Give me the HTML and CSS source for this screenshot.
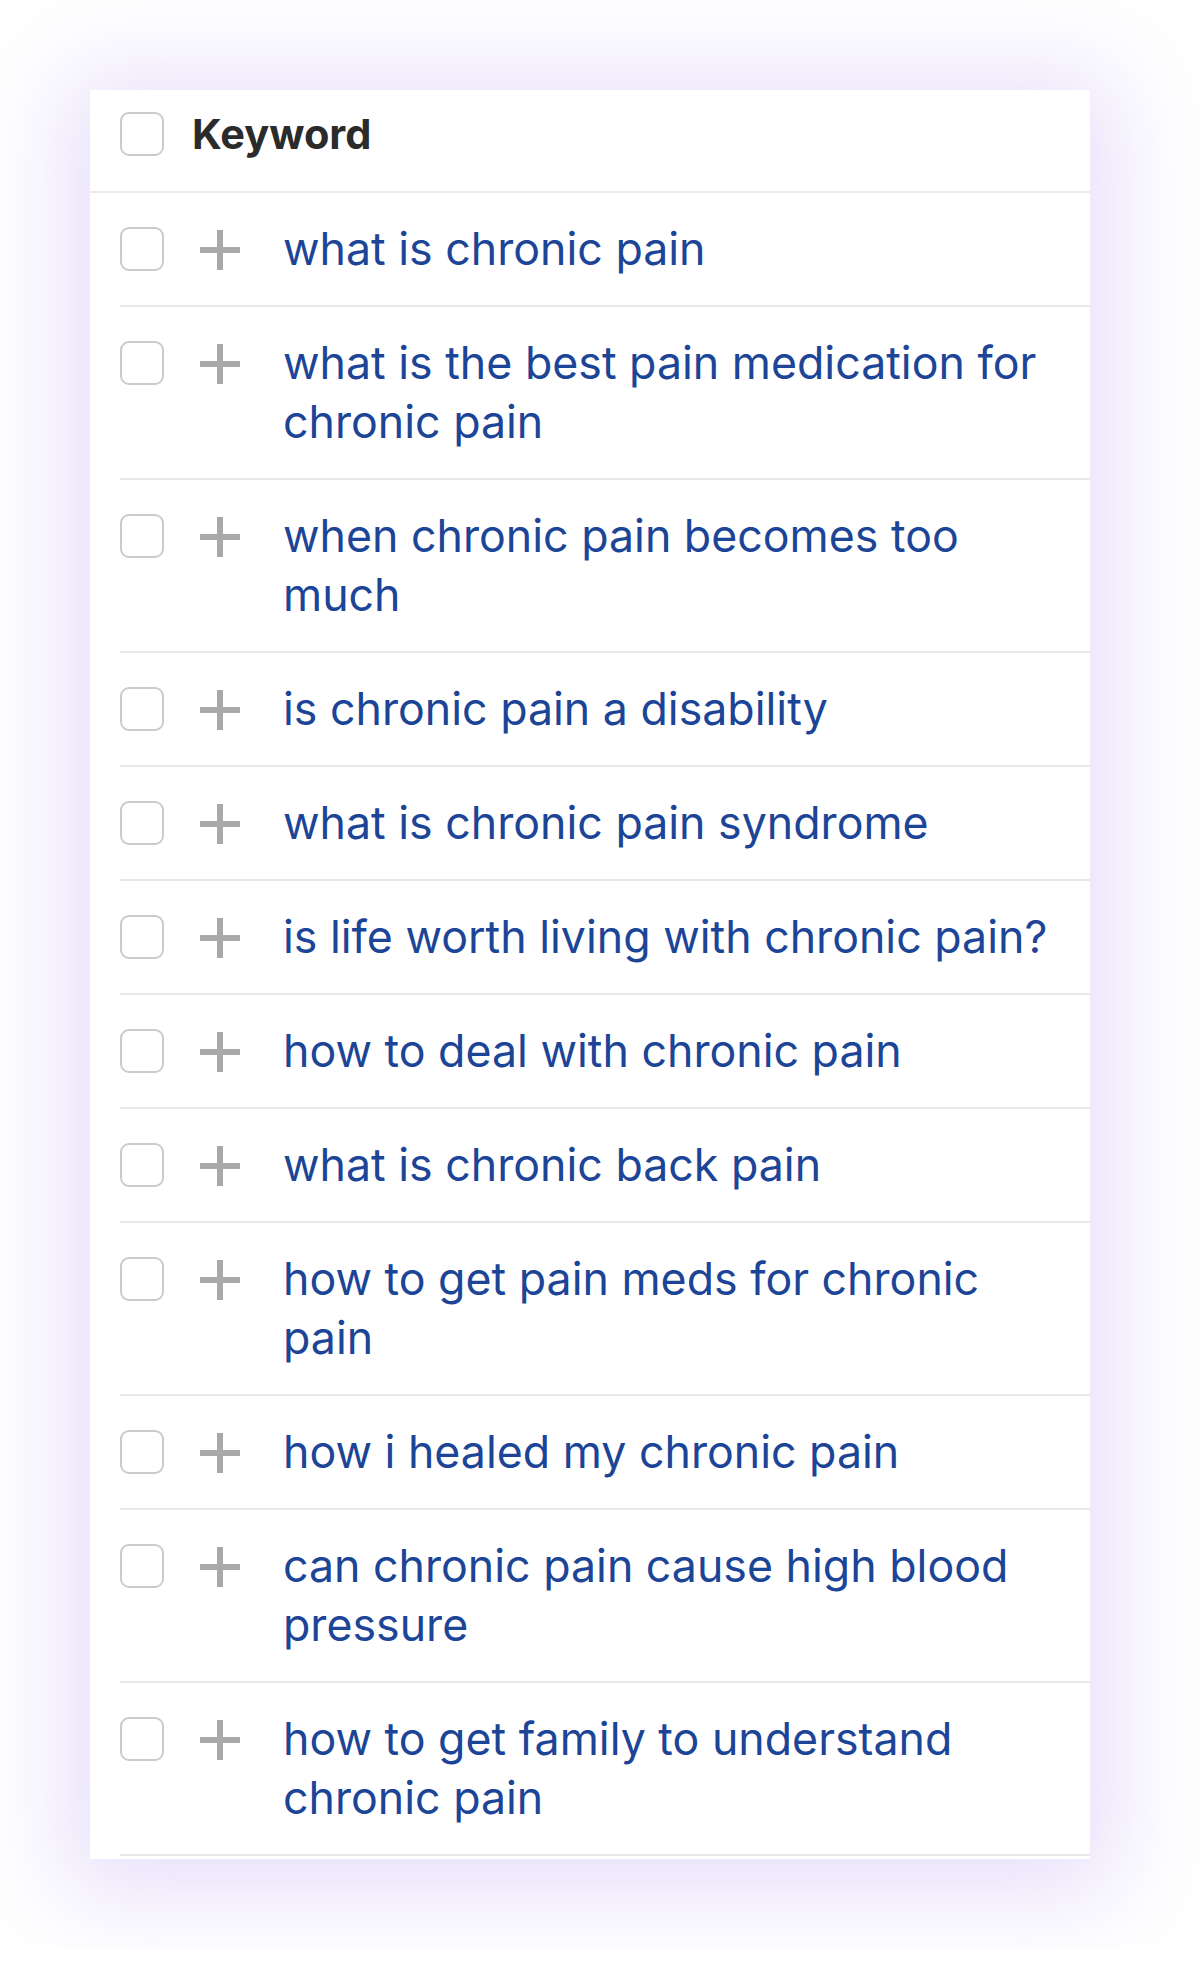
FILE: index.html
```html
<!DOCTYPE html>
<html lang="en">
<head>
    <meta charset="UTF-8">
    <title>Keywords</title>
    <meta name="viewport" content="width=device-width, initial-scale=1">
    <link rel="stylesheet" href="styles.css">
</head>
<body>
    <div id="card">
        <div class="head">
            <input type="checkbox" class="check">
            <span class="head-title">Keyword</span>
        </div>

        <ul id="keywords">
            <li class="row">
                <input type="checkbox" class="check">
                <svg class="add" viewBox="0 0 40 40"><path d="M20 0v40M0 20h40"/></svg>
                <span class="kw">what is chronic pain</span>
            </li>
            <li class="row">
                <input type="checkbox" class="check">
                <svg class="add" viewBox="0 0 40 40"><path d="M20 0v40M0 20h40"/></svg>
                <span class="kw">what is the best pain medication for chronic pain</span>
            </li>
            <li class="row">
                <input type="checkbox" class="check">
                <svg class="add" viewBox="0 0 40 40"><path d="M20 0v40M0 20h40"/></svg>
                <span class="kw">when chronic pain becomes too much</span>
            </li>
            <li class="row">
                <input type="checkbox" class="check">
                <svg class="add" viewBox="0 0 40 40"><path d="M20 0v40M0 20h40"/></svg>
                <span class="kw">is chronic pain a disability</span>
            </li>
            <li class="row">
                <input type="checkbox" class="check">
                <svg class="add" viewBox="0 0 40 40"><path d="M20 0v40M0 20h40"/></svg>
                <span class="kw">what is chronic pain syndrome</span>
            </li>
            <li class="row">
                <input type="checkbox" class="check">
                <svg class="add" viewBox="0 0 40 40"><path d="M20 0v40M0 20h40"/></svg>
                <span class="kw">is life worth living with chronic pain?</span>
            </li>
            <li class="row">
                <input type="checkbox" class="check">
                <svg class="add" viewBox="0 0 40 40"><path d="M20 0v40M0 20h40"/></svg>
                <span class="kw">how to deal with chronic pain</span>
            </li>
            <li class="row">
                <input type="checkbox" class="check">
                <svg class="add" viewBox="0 0 40 40"><path d="M20 0v40M0 20h40"/></svg>
                <span class="kw">what is chronic back pain</span>
            </li>
            <li class="row">
                <input type="checkbox" class="check">
                <svg class="add" viewBox="0 0 40 40"><path d="M20 0v40M0 20h40"/></svg>
                <span class="kw">how to get pain meds for chronic pain</span>
            </li>
            <li class="row">
                <input type="checkbox" class="check">
                <svg class="add" viewBox="0 0 40 40"><path d="M20 0v40M0 20h40"/></svg>
                <span class="kw">how i healed my chronic pain</span>
            </li>
            <li class="row">
                <input type="checkbox" class="check">
                <svg class="add" viewBox="0 0 40 40"><path d="M20 0v40M0 20h40"/></svg>
                <span class="kw">can chronic pain cause high blood pressure</span>
            </li>
            <li class="row">
                <input type="checkbox" class="check">
                <svg class="add" viewBox="0 0 40 40"><path d="M20 0v40M0 20h40"/></svg>
                <span class="kw">how to get family to understand chronic pain</span>
            </li>
        </ul>
    </div>
</body>
</html>
```

FILE: styles.css
```css
body, html {
    margin: 0;
    padding: 0;
    font-family: 'Inter', 'Helvetica', 'Arial', sans-serif;
    background-color: #fff;
}
body {
    padding: 90px;
}

#card {
    width: 1000px;
    background-color: #fff;
    box-shadow: 0 10px 90px 25px rgba(176, 150, 238, 0.3);
    padding-bottom: 3px;
}

.check {
    -webkit-appearance: none;
    appearance: none;
    flex: none;
    width: 44px;
    height: 44px;
    margin: 0;
    border: 2px solid #cbcbcb;
    border-radius: 9px;
    background: #fff;
}

.head {
    display: flex;
    align-items: center;
    gap: 28px;
    padding: 22px 30px 35px;
    border-bottom: 2px solid #ebebeb;
}

.head-title {
    font-size: 41.5px;
    line-height: 44px;
    font-weight: 700;
    color: #2b2b2b;
}

#keywords {
    list-style: none;
    margin: 0;
    padding: 0;
}

.row {
    display: flex;
    align-items: flex-start;
    margin-left: 30px;
    padding: 27px 36px 26px 0;
    border-bottom: 2px solid #e8e8e8;
}

.row .check {
    margin-top: 7px;
}

.add {
    flex: none;
    width: 40px;
    height: 40px;
    margin: 10px 0 0 36px;
    stroke: #a9a9a9;
    stroke-width: 6;
}

.kw {
    margin-left: 43px;
    font-size: 44.7px;
    line-height: 59px;
    color: #1c4597;
}
```
